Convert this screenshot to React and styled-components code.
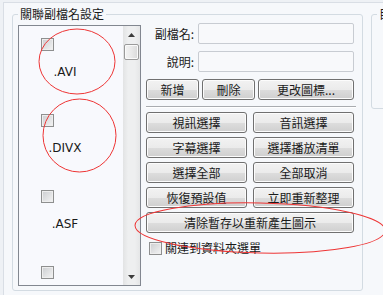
import styled, { createGlobalStyle } from "styled-components";

const GlobalStyle = createGlobalStyle`
  html, body {
    margin: 0;
    padding: 0;
    width: 383px;
    height: 295px;
    overflow: hidden;
    background: #eef1f5;
  }
  body {
    font-family: "Noto Sans CJK TC", sans-serif;
    font-size: 12px;
    color: #1a1a1a;
  }
`;

const Page = styled.div`
  position: relative;
  width: 383px;
  height: 295px;
  overflow: hidden;
`;

const TabPage = styled.div`
  margin: 2px 0 0 3px;
  height: 293px;
  box-sizing: border-box;
  border-top: 1px solid #d9dee5;
  border-left: 1px solid #d9dee5;
  background: #f6f8fb;
  display: flex;
  align-items: flex-start;
  overflow: hidden;
`;

const GroupBox = styled.fieldset`
  flex: none;
  width: ${(p) => p.$width}px;
  height: ${(p) => (p.$height ? `${p.$height}px` : "auto")};
  box-sizing: border-box;
  margin: 3px 0 0 8px;
  padding: 1px 8px 4px 5px;
  border: 1px solid #d3dbe2;
  border-radius: 3px;
  display: flex;
  align-items: flex-start;
  gap: 5px;
  min-width: 0;
`;

const Legend = styled.legend`
  padding: 0 2px;
  font-size: 12px;
  line-height: 16px;
  color: #1a1a1a;
`;

const ListBox = styled.div`
  margin-top: 2px;
  width: 123px;
  height: 261px;
  box-sizing: border-box;
  border: 1px solid #828790;
  background: #f8f9fd;
  display: flex;
`;

const Items = styled.div`
  flex: 1;
  overflow: hidden;
`;

const Item = styled.div`
  width: 92px;
  height: 76px;
  padding-top: 12px;
  box-sizing: border-box;
`;

const CheckBox = styled.span`
  display: block;
  flex: none;
  width: 13px;
  height: 13px;
  box-sizing: border-box;
  border: 1px solid #8e8f8f;
  background: linear-gradient(135deg, #cbcdd0, #f4f4f4);
  box-shadow: inset 0 0 0 1px #eeeeee;
  margin-left: ${(p) => p.$indent || 0}px;
`;

const ItemLabel = styled.div`
  margin-top: 14px;
  font-family: "DejaVu Sans", sans-serif;
  font-size: 12px;
  line-height: 15px;
  text-align: center;
  color: #1a1a1a;
`;

const ScrollBar = styled.div`
  width: 17px;
  height: 100%;
  display: flex;
  flex-direction: column;
  align-items: center;
  background: linear-gradient(90deg, #e2e3e4, #eeeff0 30%, #eeeff0 70%, #e5e6e7);
`;

const ArrowButton = styled.div`
  width: 17px;
  height: 17px;
  display: flex;
  align-items: center;
  justify-content: center;
`;

const Thumb = styled.div`
  width: 15px;
  height: 16px;
  margin-top: 1px;
  box-sizing: border-box;
  border: 1px solid #9a9a9a;
  border-radius: 2px;
  background: linear-gradient(90deg, #f3f3f3, #e9e9e9 50%, #d9d9d9);
  box-shadow: inset 0 0 0 1px #fafafa;
`;

const Spacer = styled.div`
  flex: 1;
`;

const Panel = styled.div`
  width: 208px;
  display: flex;
  flex-direction: column;
`;

const FormGrid = styled.div`
  display: grid;
  grid-template-columns: 48px 156px;
  column-gap: 4px;
  row-gap: 7px;
`;

const FieldLabel = styled.label`
  text-align: right;
  line-height: 21px;
  font-size: 12px;
`;

const TextInput = styled.input`
  height: 21px;
  box-sizing: border-box;
  border: 1px solid #c8ccd2;
  border-radius: 2px;
  background: #f8f9fb;
  padding: 0 3px;
  outline: none;
`;

const ButtonRow = styled.div`
  margin-top: 7px;
  display: grid;
  grid-template-columns: 53px 53px 1fr;
  gap: 3px;
`;

const Separator = styled.div`
  margin: 6px 0 5px;
  width: calc(100% + 2px);
  height: 1px;
  background: #a9acb0;
  box-shadow: 0 1px 0 #ffffff;
`;

const ButtonGrid = styled.div`
  display: grid;
  grid-template-columns: 1fr 1fr;
  column-gap: 6px;
  row-gap: 4px;
`;

const Button = styled.button`
  grid-column: ${(p) => (p.$wide ? "1 / -1" : "auto")};
  height: 21px;
  padding: 0;
  border: 1px solid #707070;
  border-radius: 3px;
  background: linear-gradient(#f2f2f2 0%, #ebebeb 50%, #dddddd 51%, #cfcfcf 100%);
  box-shadow: inset 0 0 0 1px #fcfcfc;
  font-family: "Noto Sans CJK TC", sans-serif;
  font-size: 12px;
  line-height: 19px;
  color: #1a1a1a;
`;

const CheckRow = styled.div`
  margin: 8px 0 0 3px;
  display: flex;
  align-items: center;
  gap: 3px;
  line-height: 14px;
`;

const Marks = styled.svg`
  position: absolute;
  left: 0;
  top: 0;
  width: 383px;
  height: 295px;
  pointer-events: none;
`;

const extensions = [".AVI", ".DIVX", ".ASF", ""];

const UpArrow = () => (
  <svg width="7" height="4" viewBox="0 0 7 4">
    <polygon points="0,4 7,4 3.5,0" fill="#3c3c3c" />
  </svg>
);

const DownArrow = () => (
  <svg width="7" height="4" viewBox="0 0 7 4">
    <polygon points="0,0 7,0 3.5,4" fill="#3c3c3c" />
  </svg>
);

const App = () => {
  return (
    <Page>
      <GlobalStyle />
      <TabPage>
        <GroupBox $width={351}>
          <Legend>關聯副檔名設定</Legend>
          <ListBox>
            <Items>
              {extensions.map((ext, i) => (
                <Item key={i}>
                  <CheckBox $indent={22} />
                  {ext && <ItemLabel>{ext}</ItemLabel>}
                </Item>
              ))}
            </Items>
            <ScrollBar>
              <ArrowButton>
                <UpArrow />
              </ArrowButton>
              <Thumb />
              <Spacer />
              <ArrowButton>
                <DownArrow />
              </ArrowButton>
            </ScrollBar>
          </ListBox>
          <Panel>
            <FormGrid>
              <FieldLabel>副檔名:</FieldLabel>
              <TextInput />
              <FieldLabel>說明:</FieldLabel>
              <TextInput />
            </FormGrid>
            <ButtonRow>
              <Button>新增</Button>
              <Button>刪除</Button>
              <Button>更改圖標...</Button>
            </ButtonRow>
            <Separator />
            <ButtonGrid>
              <Button>視訊選擇</Button>
              <Button>音訊選擇</Button>
              <Button>字幕選擇</Button>
              <Button>選擇播放清單</Button>
              <Button>選擇全部</Button>
              <Button>全部取消</Button>
              <Button>恢復預設值</Button>
              <Button>立即重新整理</Button>
              <Button $wide>清除暫存以重新產生圖示</Button>
            </ButtonGrid>
            <CheckRow>
              <CheckBox />
              <span>關連到資料夾選單</span>
            </CheckRow>
          </Panel>
        </GroupBox>
        <GroupBox $width={80} $height={103}>
          <Legend>目錄</Legend>
        </GroupBox>
      </TabPage>
      <Marks viewBox="0 0 383 295">
        <ellipse cx="77" cy="61.5" rx="38" ry="32.5" fill="none" stroke="#ee3535" strokeWidth="1" />
        <ellipse cx="79.5" cy="135.5" rx="36.5" ry="36.5" fill="none" stroke="#ee3535" strokeWidth="1" />
        <ellipse
          cx="260"
          cy="228"
          rx="125"
          ry="25"
          transform="rotate(1.2 260 228)"
          fill="none"
          stroke="#ee3535"
          strokeWidth="1"
        />
      </Marks>
    </Page>
  );
};

export default App;
